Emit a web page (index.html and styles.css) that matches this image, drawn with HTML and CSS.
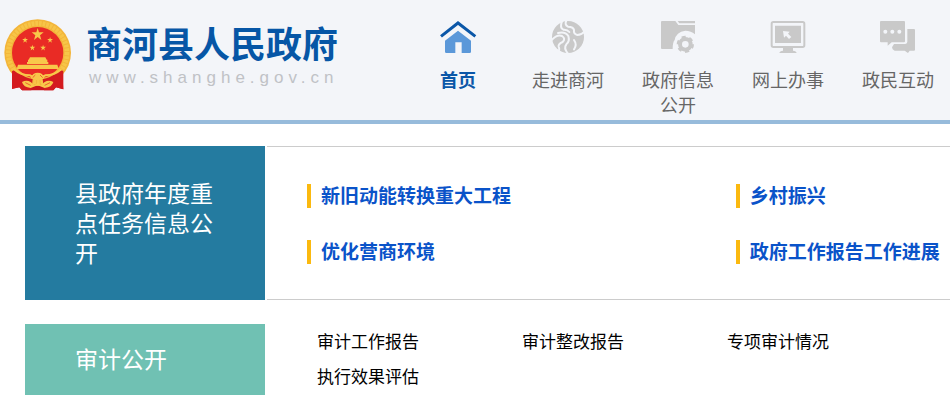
FILE: index.html
```html
<!DOCTYPE html>
<html lang="zh-CN">
<head>
  <meta charset="UTF-8">
  <meta name="viewport" content="width=device-width, initial-scale=1.0">
  <title>商河县人民政府</title>
  <link rel="stylesheet" href="styles.css">
</head>
<body>
  <header class="header">
    <a class="brand" href="#">
      <svg class="emblem" viewBox="12 24 204 222" aria-hidden="true">
        <path fill="#c9161d" d="M42 180 L36 236 L58 232 L66 241 L160 241 L168 232 L190 238 L186 180 Z"/>
        <circle cx="113" cy="128" r="100" fill="#f3b53a"/>
        <circle cx="113" cy="128" r="88" fill="none" stroke="#f7c548" stroke-width="14" stroke-dasharray="8 3"/>
        <circle cx="113" cy="128" r="77" fill="#e92b25"/>
        <g fill="#f8c84a">
          <path id="star" d="M113 54 L117 67 L131 67 L120 76 L124 90 L113 81 L102 90 L106 76 L95 67 L109 67 Z"/>
          <use href="#star" transform="translate(21 55) scale(.48)"/>
          <use href="#star" transform="translate(96 55) scale(.48)"/>
          <use href="#star" transform="translate(43 78) scale(.48)"/>
          <use href="#star" transform="translate(75 78) scale(.48)"/>
          <path d="M90 142 H136 L140 149 H86 Z M84 149 H142 V156 H145 V162 H81 V156 H84 Z M54 164 H172 L176 177 H50 Z"/>
        </g>
        <path fill="#d41b20" d="M36 184 Q44 176 56 188 Q76 204 98 207 L94 241 L66 241 L58 232 L36 237 Z M190 184 Q182 176 170 188 Q150 204 128 207 L132 241 L160 241 L168 232 L190 238 Z"/>
        <path fill="none" stroke="#f8c84a" stroke-width="6" d="M42 178 Q62 196 90 196 Q113 212 136 196 Q164 196 184 178"/>
        <path fill="#f8c84a" d="M92 204 Q98 188 113 188 Q128 188 134 204 Q124 211 113 211 Q102 211 92 204 Z M66 216 Q80 208 92 216 L104 226 L113 218 L122 226 L134 216 Q146 208 160 216 Q156 232 134 234 L113 226 L92 234 Q70 232 66 216 Z"/>
        <path fill="none" stroke="#e92b25" stroke-width="2" d="M98 203 L106 195 M128 203 L120 195 M76 218 L92 226 M150 218 L134 226"/>
      </svg>
      <span class="brand-text">
        <strong class="brand-name">商河县人民政府</strong>
        <span class="brand-url">www.shanghe.gov.cn</span>
      </span>
    </a>
    <nav class="nav">
      <a class="nav-item active" href="#">
        <svg class="nav-icon" viewBox="0 0 132 126" aria-hidden="true">
          <path fill="#5b98d9" d="M66 44 L105 74 V107 Q105 111 101 111 H77 V79 H58 V111 H31 Q27 111 27 107 V74 Z"/>
          <path fill="none" stroke="#0b57a8" stroke-width="9" d="M15 61 L66 21 L118 61"/>
        </svg>
        <span>首页</span>
      </a>
      <a class="nav-item" href="#">
        <svg class="nav-icon" viewBox="0 0 132 126" aria-hidden="true">
          <circle cx="66" cy="63" r="48" fill="#c9c9c9"/>
          <g fill="none" stroke="#f3f5f9" stroke-width="6" stroke-linecap="round">
            <path d="M62 12 Q54 26 66 32 Q82 32 84 42 Q82 54 94 57 Q106 57 116 46"/>
            <path d="M48 16 Q40 36 52 41 Q64 40 70 48"/>
            <path d="M16 73 Q34 54 48 60 Q60 68 50 78 Q36 84 38 92 Q42 100 38 106"/>
            <path d="M36 51 Q58 46 67 60 Q72 76 61 85 Q52 96 66 113"/>
            <path d="M84 72 Q94 86 84 100"/>
          </g>
        </svg>
        <span>走进商河</span>
      </a>
      <a class="nav-item" href="#">
        <svg class="nav-icon" viewBox="0 0 132 126" aria-hidden="true">
          <path fill="#c9c9c9" d="M18 15 H58 L67 27 H117 V55 Q105 44 88 44 Q60 48 56 72 Q50 78 50 99 H18 Q15 99 15 96 V18 Q15 15 18 15 Z M65 15 H117 V22 H70 Z"/>
          <circle cx="88" cy="85" r="31" fill="#f3f5f9"/>
          <circle cx="88" cy="85" r="16" fill="none" stroke="#c9c9c9" stroke-width="12"/>
          <circle cx="88" cy="85" r="22" fill="none" stroke="#c9c9c9" stroke-width="8" stroke-dasharray="12 11"/>
        </svg>
        <span>政府信息公开</span>
      </a>
      <a class="nav-item" href="#">
        <svg class="nav-icon" viewBox="0 0 132 126" aria-hidden="true">
          <rect x="17" y="18" width="98" height="75" rx="5" fill="none" stroke="#c9c9c9" stroke-width="6"/>
          <path fill="#c9c9c9" d="M27 29 H105 V81 H27 Z M51 95 H81 V104 Q91 105 92 111 H40 Q41 105 51 104 Z"/>
          <path fill="#f3f5f9" d="M51 45 L71 47 L66 53 L76 63 L69 69 L60 59 L54 65 Z"/>
        </svg>
        <span>网上办事</span>
      </a>
      <a class="nav-item" href="#">
        <svg class="nav-icon" viewBox="0 0 132 126" aria-hidden="true">
          <path fill="#c9c9c9" d="M15 15 H84 Q87 15 87 18 V76 Q87 79 84 79 H47 L35 89 V79 H15 Q12 79 12 76 V18 Q12 15 15 15 Z M94 39 H114 Q117 39 117 42 V101 Q117 104 114 104 H101 L96 111 L86 104 H56 Q48 101 48 94 L54 84 H88 Q94 83 94 77 Z"/>
          <g fill="#f3f5f9">
            <circle cx="28" cy="47" r="6"/>
            <circle cx="49" cy="47" r="6"/>
            <circle cx="70" cy="47" r="6"/>
          </g>
        </svg>
        <span>政民互动</span>
      </a>
    </nav>
  </header>

  <main class="main">
    <section class="section">
      <h2 class="section-title blue">县政府年度重点任务信息公开</h2>
      <ul class="task-list">
        <li><a href="#">新旧动能转换重大工程</a></li>
        <li><a href="#">乡村振兴</a></li>
        <li><a href="#">优化营商环境</a></li>
        <li><a href="#">政府工作报告工作进展</a></li>
      </ul>
    </section>

    <section class="section">
      <h2 class="section-title green">审计公开</h2>
      <ul class="audit-list">
        <li><a href="#">审计工作报告</a></li>
        <li><a href="#">审计整改报告</a></li>
        <li><a href="#">专项审计情况</a></li>
        <li><a href="#">执行效果评估</a></li>
      </ul>
    </section>
  </main>
</body>
</html>
```
FILE: styles.css
```css
* {
  box-sizing: border-box;
}

body {
  margin: 0;
  font-family: "Liberation Sans", "Noto Sans CJK SC", sans-serif;
  background-color: #fff;
  color: #000;
}

a {
  color: inherit;
  text-decoration: none;
}

ul {
  margin: 0;
  padding: 0;
  list-style: none;
}

.header {
  display: flex;
  align-items: flex-start;
  min-height: 124px;
  background-color: #f3f5f9;
  border-bottom: 4px solid #97bbdb;
  overflow: hidden;
}

.brand {
  display: flex;
  flex: 0 0 403px;
  gap: 14px;
  padding: 18px 0 0 4px;
}

.emblem {
  width: 68px;
  height: 74px;
}

.brand-text {
  display: flex;
  flex-direction: column;
  padding-top: 8px;
}

.brand-name {
  font-size: 36px;
  line-height: 40px;
  color: #0656a6;
}

.brand-url {
  padding-left: 3px;
  font-size: 17px;
  line-height: 24px;
  letter-spacing: 5px;
  color: #c0c2c6;
}

.nav {
  display: flex;
  padding-top: 16px;
}

.nav-item {
  display: flex;
  flex: 0 0 110px;
  flex-direction: column;
  align-items: center;
  gap: 11px;
  padding: 0 15px;
  font-size: 18px;
  line-height: 25px;
  text-align: center;
  color: #666;
}

.nav-item.active {
  font-weight: bold;
  color: #0b57a8;
}

.nav-icon {
  width: 44px;
  height: 42px;
}

.main {
  display: flex;
  flex-direction: column;
  gap: 24px;
  padding: 22px 0 0 25px;
}

.section {
  display: flex;
  gap: 2px;
}

.section-title {
  flex: 0 0 240px;
  margin: 0;
  padding: 21px 50px 19px;
  font-size: 23px;
  font-weight: normal;
  line-height: 30px;
  color: #fff;
}

.blue {
  padding: 33px 50px 31px;
  background-color: #247ba0;
}

.green {
  background-color: #70c1b3;
}

.task-list {
  display: grid;
  flex: 1;
  grid-template-columns: 2fr 1fr;
  align-content: start;
  row-gap: 32px;
  padding: 37px 0 0 40px;
  border-top: 1px solid #ccc;
  border-bottom: 1px solid #ccc;
}

.task-list li {
  height: 24px;
  padding-left: 10px;
  border-left: 4px solid #fbb90f;
  font-size: 19px;
  font-weight: bold;
  line-height: 26px;
  color: #0a53c9;
}

.audit-list {
  display: grid;
  flex: 1;
  grid-template-columns: repeat(auto-fill, 205px);
  align-content: start;
  padding: 1px 0 0 50px;
  font-size: 17px;
  line-height: 35px;
}

.task-list a:hover,
.audit-list a:hover {
  text-decoration: underline;
}
```
